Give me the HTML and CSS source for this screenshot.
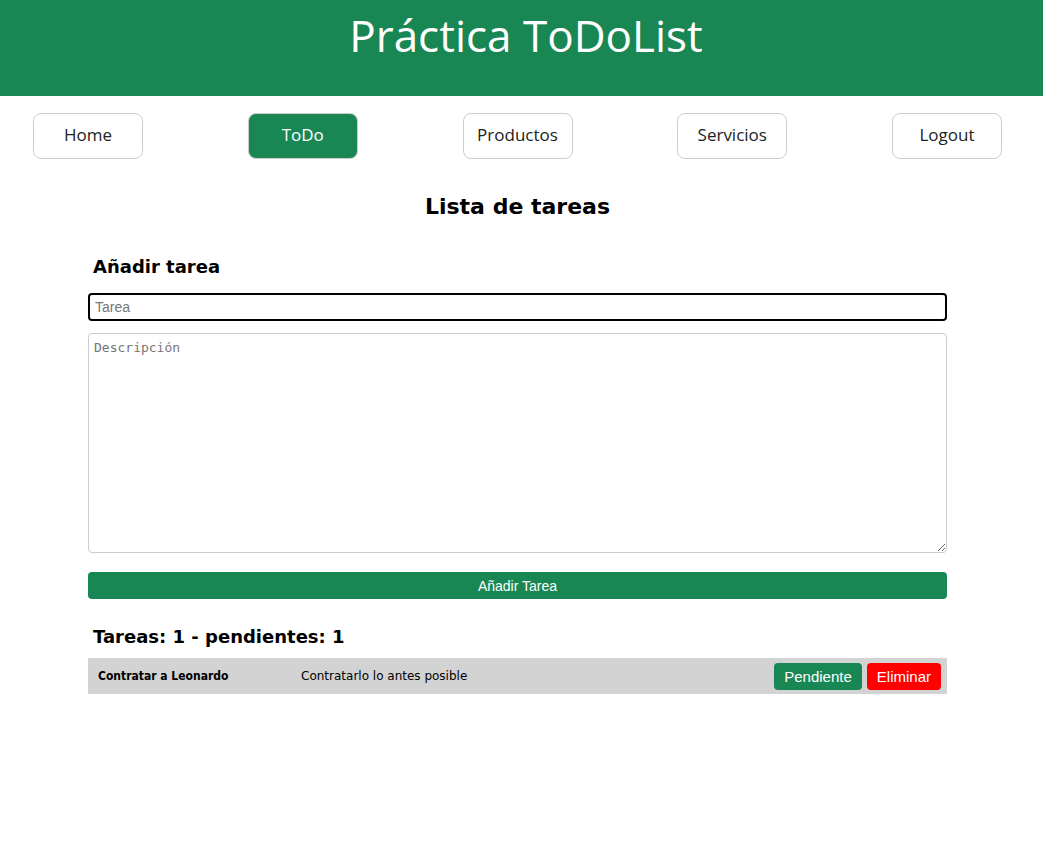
FILE: index.html
```html
<!DOCTYPE html>
<html lang="es">
<head>
<meta charset="utf-8">
<title>Práctica ToDoList</title>
<link rel="stylesheet" href="styles.css">
</head>
<body>
<header class="site-header">
  <h1 class="site-title">Práctica ToDoList</h1>
</header>
<nav class="nav">
  <a class="nav-btn">Home</a>
  <a class="nav-btn active">ToDo</a>
  <a class="nav-btn">Productos</a>
  <a class="nav-btn">Servicios</a>
  <a class="nav-btn">Logout</a>
</nav>
<main class="main">
  <h2 class="page-title">Lista de tareas</h2>
  <section class="todo">
    <h3 class="section-title">Añadir tarea</h3>
    <input class="input focused" type="text" placeholder="Tarea">
    <textarea class="textarea" placeholder="Descripción"></textarea>
    <button class="add-btn">Añadir Tarea</button>
    <h3 class="section-title count">Tareas: 1 - pendientes: 1</h3>
    <div class="task">
      <span class="task-name">Contratar a Leonardo</span>
      <span class="task-desc">Contratarlo lo antes posible</span>
      <div class="task-actions">
        <button class="task-btn pending">Pendiente</button>
        <button class="task-btn delete">Eliminar</button>
      </div>
    </div>
  </section>
</main>
</body>
</html>
```
FILE: styles.css
```css
* { box-sizing: border-box; }
html, body { margin: 0; padding: 0; background: #fff; }
body { font-family: "DejaVu Sans", Verdana, sans-serif; color: #000; }

.site-header {
  background: #198754;
  height: 96px;
  display: flex;
  justify-content: center;
  padding-left: 9px;
}
.site-title {
  margin: 8px 0 0;
  font-family: "Open Sans", sans-serif;
  font-weight: 400;
  font-size: 44px;
  line-height: 54px;
  color: #fff;
}

.nav {
  display: flex;
  justify-content: space-between;
  padding: 17px 41px 0 33px;
  height: 63px;
}
.nav-btn {
  width: 110px;
  height: 46px;
  border: 1px solid #ccc;
  border-radius: 8px;
  display: flex;
  align-items: center;
  justify-content: center;
  font-family: "Open Sans", sans-serif;
  font-size: 17px;
  color: #222;
  padding-bottom: 4px;
}
.nav-btn.active { background: #198754; color: #fff; }

.page-title {
  margin: 31px 0 0;
  text-align: center;
  font-size: 22px;
  line-height: 34px;
  font-weight: 700;
  padding-right: 8px;
}

.todo {
  width: 859px;
  margin: 0 0 0 88px;
  display: flex;
  flex-direction: column;
}
.section-title {
  margin: 0;
  padding-left: 5px;
  font-size: 18px;
  font-weight: 700;
  line-height: 28px;
}
.todo > .section-title:first-child { margin-top: 29px; margin-bottom: 12px; }

.input {
  height: 28px;
  border: 2px solid #000;
  border-radius: 4px;
  padding: 0 5px;
  font-family: "Liberation Sans", Arial, sans-serif;
  font-size: 14px;
  outline: none;
}
.input::placeholder { color: #757575; }
.textarea {
  margin-top: 12px;
  height: 220px;
  border: 1px solid #ccc;
  border-radius: 4px;
  padding: 6px 5px;
  font-family: "DejaVu Sans Mono", monospace;
  font-size: 13px;
  resize: vertical;
}
.textarea::placeholder { color: #757575; }

.add-btn {
  margin-top: 19px;
  height: 27px;
  border: none;
  border-radius: 4px;
  background: #198754;
  color: #fff;
  font-family: "Liberation Sans", Arial, sans-serif;
  font-size: 14px;
}
.count { margin-top: 23px; margin-bottom: 7px; line-height: 29px; }

.task {
  display: flex;
  align-items: center;
  height: 36px;
  background: #d3d3d3;
  padding: 0 6px 0 10px;
  font-size: 12px;
}
.task-name {
  width: 203px;
  font-family: "DejaVu Sans Condensed", "DejaVu Sans", sans-serif;
  font-weight: 700;
  font-size: 12px;
}
.task-desc { flex: 1; font-size: 12px; }
.task-actions { display: flex; gap: 5px; }
.task-btn {
  height: 27px;
  border: none;
  border-radius: 4px;
  color: #fff;
  font-family: "Liberation Sans", Arial, sans-serif;
  font-size: 15px;
  padding: 0 10px;
}
.task-btn.pending { background: #198754; }
.task-btn.delete { background: #ff0000; }
```
